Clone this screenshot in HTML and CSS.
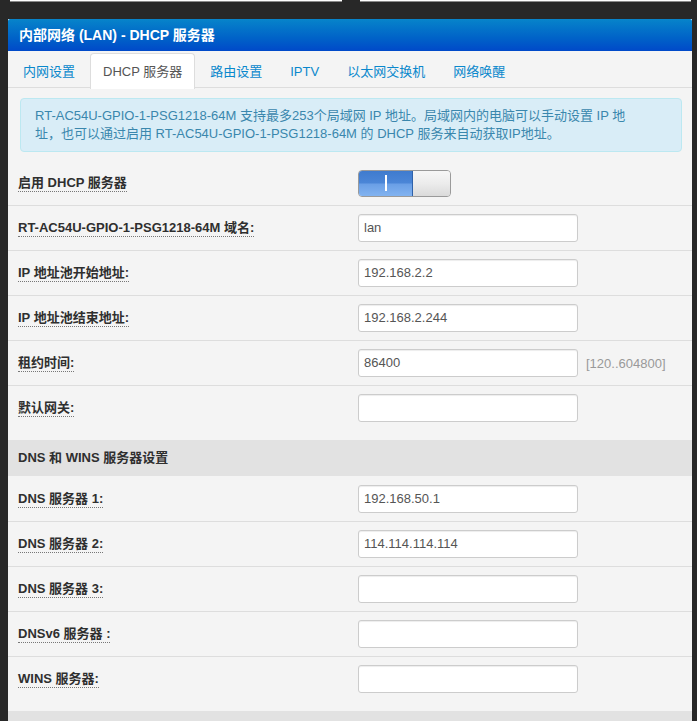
FILE: index.html
```html
<!DOCTYPE html>
<html lang="zh-CN">
<head>
<meta charset="utf-8">
<title>DHCP 服务器</title>
<link rel="stylesheet" href="styles.css">
</head>
<body>
<div class="topstrip"><div class="stub"></div><div class="stub"></div></div>
<div class="panel">
  <div class="panel-head">内部网络 (LAN) - DHCP 服务器</div>
  <ul class="tabs">
    <li class="tab">内网设置</li>
    <li class="tab active">DHCP 服务器</li>
    <li class="tab">路由设置</li>
    <li class="tab">IPTV</li>
    <li class="tab">以太网交换机</li>
    <li class="tab">网络唤醒</li>
  </ul>
  <div class="info">RT-AC54U-GPIO-1-PSG1218-64M 支持最多253个局域网 IP 地址。局域网内的电脑可以手动设置 IP 地址，也可以通过启用 RT-AC54U-GPIO-1-PSG1218-64M 的 DHCP 服务来自动获取IP地址。</div>
  <div class="form">
    <div class="row">
      <div class="label"><span>启用 DHCP 服务器</span></div>
      <div class="field">
        <div class="switch"><div class="switch-on"><span class="bar"></span></div><div class="switch-off"></div></div>
      </div>
    </div>
    <div class="row">
      <div class="label"><span>RT-AC54U-GPIO-1-PSG1218-64M 域名:</span></div>
      <div class="field"><div class="input">lan</div></div>
    </div>
    <div class="row">
      <div class="label"><span>IP 地址池开始地址:</span></div>
      <div class="field"><div class="input">192.168.2.2</div></div>
    </div>
    <div class="row">
      <div class="label"><span>IP 地址池结束地址:</span></div>
      <div class="field"><div class="input">192.168.2.244</div></div>
    </div>
    <div class="row">
      <div class="label"><span>租约时间:</span></div>
      <div class="field"><div class="input">86400</div><span class="hint">[120..604800]</span></div>
    </div>
    <div class="row">
      <div class="label"><span>默认网关:</span></div>
      <div class="field"><div class="input"></div></div>
    </div>
  </div>
  <div class="section-title">DNS 和 WINS 服务器设置</div>
  <div class="form">
    <div class="row">
      <div class="label"><span>DNS 服务器 1:</span></div>
      <div class="field"><div class="input">192.168.50.1</div></div>
    </div>
    <div class="row">
      <div class="label"><span>DNS 服务器 2:</span></div>
      <div class="field"><div class="input">114.114.114.114</div></div>
    </div>
    <div class="row">
      <div class="label"><span>DNS 服务器 3:</span></div>
      <div class="field"><div class="input"></div></div>
    </div>
    <div class="row">
      <div class="label"><span>DNSv6 服务器 :</span></div>
      <div class="field"><div class="input"></div></div>
    </div>
    <div class="row">
      <div class="label"><span>WINS 服务器:</span></div>
      <div class="field"><div class="input"></div></div>
    </div>
  </div>
  <div class="section-title"></div>
</div>
</body>
</html>
```
FILE: styles.css
```css
html, body {
  margin: 0;
  padding: 0;
  background: #282828;
  font-family: "Liberation Sans", "Noto Sans CJK SC", sans-serif;
  font-size: 13px;
  color: #333;
  height: 721px;
  overflow: hidden;
}

.topstrip {
  display: flex;
  gap: 18px;
  padding: 0 6px 0 10px;
  height: 2px;
}
.stub {
  flex: 1;
  height: 1px;
  background: #fff;
  border-bottom: 1px solid #8a8a8a;
}

.panel {
  margin: 17px 5px 0 8px;
  background: #f4f4f4;
}

.panel-head {
  height: 32px;
  line-height: 32px;
  padding-left: 11px;
  color: #fff;
  font-weight: bold;
  font-size: 14px;
  background: linear-gradient(to bottom, #0784ca 0%, #0062c8 60%, #0049c9 100%);
  border-radius: 2px 2px 0 0;
}

.tabs {
  list-style: none;
  margin: 0;
  padding: 2px 0 0 2px;
  display: flex;
  height: 37px;
  box-sizing: border-box;
  border-bottom: 1px solid #ddd;
}
.tab {
  padding: 0 12px;
  margin-right: 2px;
  height: 35px;
  line-height: 35px;
  color: #0a88cc;
  border: 1px solid transparent;
  border-bottom: none;
  border-radius: 4px 4px 0 0;
  box-sizing: border-box;
  white-space: nowrap;
}
.tab.active {
  background: #fff;
  color: #555;
  border-color: #ddd;
  height: 36px;
}

.info {
  margin: 10px 10px 0 12px;
  padding: 8px 35px 8px 14px;
  background: #d9edf7;
  border: 1px solid #bce8f1;
  border-radius: 4px;
  color: #3a87ad;
  line-height: 18px;
}

.form {
  margin: 8px 0 10px;
}
.section-title + .form {
  margin-top: 0;
}

.row {
  display: grid;
  grid-template-columns: 350px 1fr;
  align-items: center;
  height: 45px;
  box-sizing: border-box;
  border-top: 1px solid #ddd;
}
.row:first-child {
  border-top-color: transparent;
}

.label {
  padding-left: 10px;
  padding-bottom: 4px;
  font-weight: bold;
  color: #2f2f2f;
}
.label span {
  border-bottom: 1px dotted #777;
  padding-bottom: 1px;
}

.field {
  display: flex;
  align-items: center;
  gap: 8px;
}

.input {
  width: 220px;
  height: 28px;
  box-sizing: border-box;
  border: 1px solid #ccc;
  border-radius: 3px;
  background: #fff;
  box-shadow: inset 0 1px 1px rgba(0, 0, 0, 0.075);
  padding: 0 5px;
  line-height: 26px;
  color: #555;
}

.hint {
  color: #999;
}

.switch {
  display: flex;
  width: 93px;
  height: 27px;
  box-sizing: border-box;
  border: 1px solid #9a9a9a;
  border-radius: 4px;
  overflow: hidden;
}
.switch-on {
  width: 53px;
  display: flex;
  align-items: center;
  justify-content: center;
  background: linear-gradient(to bottom, #3f7bce 0%, #4b86d7 48%, #6a9fe6 52%, #82b3f0 100%);
  border-right: 1px solid #2f62aa;
}
.switch-on .bar {
  display: block;
  width: 2px;
  height: 16px;
  background: #fff;
}
.switch-off {
  flex: 1;
  background: linear-gradient(to bottom, #f6f6f6 0%, #ececec 50%, #dadada 100%);
}

.section-title {
  height: 36px;
  line-height: 36px;
  padding-left: 10px;
  background: #e2e2e2;
  font-weight: bold;
  color: #2f2f2f;
}
```
